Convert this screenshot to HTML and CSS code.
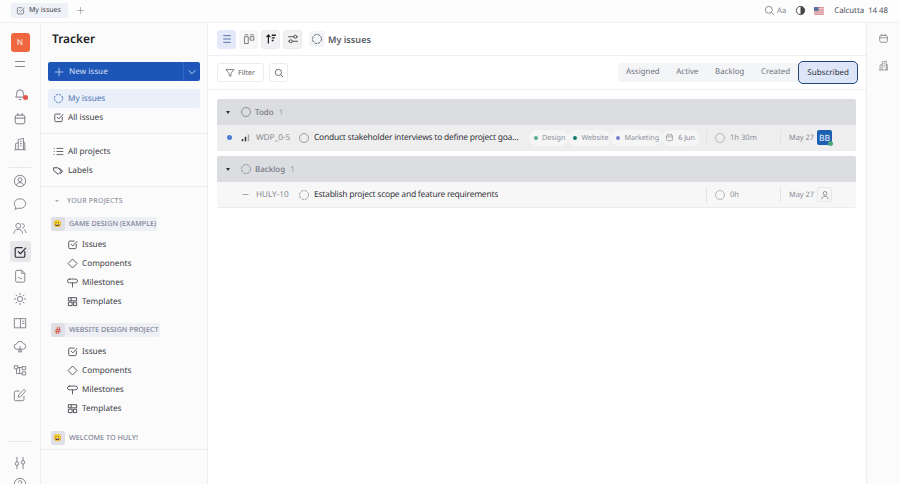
FILE: index.html
```html
<!DOCTYPE html>
<html lang="en">
<head>
<meta charset="utf-8">
<title>My issues</title>
<link rel="stylesheet" href="styles.css">
</head>
<body>
<svg class="defs" width="0" height="0">
  <defs>
    <symbol id="i-check" viewBox="0 0 16 16"><path d="M13.5 7.500v5a1.500 1.500 0 0 1-1.500 1.500H4a1.500 1.500 0 0 1-1.500-1.500V4.500A1.500 1.500 0 0 1 4 3h6.500M6 7.500l2.500 2.500L14.500 3.500" fill="none" stroke="currentColor" stroke-width="1.300" stroke-linecap="round" stroke-linejoin="round"/></symbol>
    <symbol id="i-diamond" viewBox="0 0 16 16"><path d="M8 1.500 14.500 8 8 14.500 1.500 8z" fill="none" stroke="currentColor" stroke-width="1.300" stroke-linejoin="round"/></symbol>
    <symbol id="i-milestone" viewBox="0 0 16 16"><path d="M3.500 3h9a2.200 2.200 0 0 1 0 5.500h-9a2.750 2.750 0 0 1 0-5.500zM8 8.500V14.500" fill="none" stroke="currentColor" stroke-width="1.300" stroke-linejoin="round" stroke-linecap="round"/></symbol>
    <symbol id="i-templates" viewBox="0 0 16 16"><path d="M2 2.500h12v4.500H2zM2 9h5.500v5H2zM9.500 9H14v5H9.500z" fill="none" stroke="currentColor" stroke-width="1.400"/><path d="M6 2.500v4.500" stroke="currentColor" stroke-width="1.400"/></symbol>
    <symbol id="i-calendar" viewBox="0 0 16 16"><path d="M2.500 5.500A2 2 0 0 1 4.500 3.500h7a2 2 0 0 1 2 2v6a2 2 0 0 1-2 2h-7a2 2 0 0 1-2-2zM2.500 7h11M5.500 1.800v2M10.500 1.800v2" fill="none" stroke="currentColor" stroke-width="1.100" stroke-linecap="round"/></symbol>
    <symbol id="i-building" viewBox="0 0 16 16"><path d="M1.500 14.500h13M3 14.500V7.500l3-1M6 14.500V3l6-1.500v13M12 6.500h1.500v8M8 5h2M8 7.500h2M8 10h2" fill="none" stroke="currentColor" stroke-width="1" stroke-linejoin="round"/></symbol>
    <symbol id="i-ring" viewBox="0 0 16 16"><circle cx="8" cy="8" r="6" fill="none" stroke="currentColor" stroke-width="1.300" stroke-dasharray="3.400 1.300"/></symbol>
    <symbol id="i-circle" viewBox="0 0 16 16"><circle cx="8" cy="8" r="6" fill="none" stroke="currentColor" stroke-width="1.300"/></symbol>
  </defs>
</svg>

<div class="app">
  <header class="topbar">
    <div class="tab">
      <svg class="ic9"><use href="#i-check"/></svg>
      <span>My issues</span>
    </div>
    <svg class="tab-plus" viewBox="0 0 12 12"><path d="M6 1.500v9M1.500 6h9" stroke="currentColor" stroke-width="1"/></svg>
    <div class="top-right">
      <svg class="ic11" viewBox="0 0 16 16"><circle cx="7" cy="7" r="5" fill="none" stroke="currentColor" stroke-width="1.100"/><path d="m10.800 10.800 4 4" stroke="currentColor" stroke-width="1.100"/></svg>
      <span class="aa">Aa</span>
      <svg class="ic-contrast" viewBox="0 0 12 12"><circle cx="6" cy="6" r="4.500" fill="none" stroke="#444" stroke-width="1"/><path d="M6 1.500a4.500 4.500 0 0 1 0 9z" fill="#444"/></svg>
      <svg class="flag" viewBox="0 0 10 8"><rect width="10" height="8" rx="1" fill="#d98a90"/><path d="M0 1.500h10M0 3.200h10M0 4.900h10M0 6.600h10" stroke="#f1e4e6" stroke-width=".7"/><rect width="4.500" height="4" fill="#5a6f9c"/></svg>
      <span class="clock"><span>Calcutta</span><span>14 48</span></span>
    </div>
  </header>

  <div class="workspace">
    <nav class="rail">
      <div class="avatar-n">N</div>
      <svg class="rail-menu" viewBox="0 0 12 8"><path d="M1 1.500h10M1 6.500h10" stroke="currentColor" stroke-width="1"/></svg>
      <div class="rail-group top">
        <div class="rail-btn bell">
          <svg class="ic14" viewBox="0 0 16 16"><path d="M3 11.500c1-1.200 1.200-2.500 1.200-4.500a3.800 3.800 0 0 1 7.600 0c0 2 .2 3.300 1.200 4.500zM6.500 13.500a1.600 1.600 0 0 0 3 0" fill="none" stroke="currentColor" stroke-width="1.100" stroke-linejoin="round"/></svg>
          <span class="bell-dot"></span>
        </div>
        <div class="rail-btn"><svg class="ic14"><use href="#i-calendar"/></svg></div>
        <div class="rail-btn"><svg class="ic14"><use href="#i-building"/></svg></div>
      </div>
      <div class="rail-sep"></div>
      <div class="rail-group">
        <div class="rail-btn"><svg class="ic14" viewBox="0 0 16 16"><circle cx="8" cy="8" r="6.500" fill="none" stroke="currentColor" stroke-width="1"/><circle cx="8" cy="6.500" r="2.200" fill="none" stroke="currentColor" stroke-width="1"/><path d="M3.800 12.800c.8-2 2.300-3 4.200-3s3.400 1 4.200 3" fill="none" stroke="currentColor" stroke-width="1"/></svg></div>
        <div class="rail-btn"><svg class="ic14" viewBox="0 0 16 16"><path d="M8 2c3.700 0 6.500 2.400 6.500 5.500S11.700 13 8 13c-.8 0-1.500-.1-2.200-.3L2.500 14.300l.8-3C2 10.300 1.500 9 1.500 7.500 1.500 4.400 4.300 2 8 2z" fill="none" stroke="currentColor" stroke-width="1" stroke-linejoin="round"/></svg></div>
        <div class="rail-btn"><svg class="ic14" viewBox="0 0 16 16"><circle cx="6" cy="5.500" r="2.800" fill="none" stroke="currentColor" stroke-width="1"/><path d="M1 14c.4-3 2.300-4.500 5-4.500s4.500 1.500 5 4.500M10.500 3c1.700.3 2.500 1.400 2.500 2.600s-.8 2.200-2 2.500M13 10c1.200.7 1.800 1.800 2 3.200" fill="none" stroke="currentColor" stroke-width="1" stroke-linecap="round"/></svg></div>
        <div class="rail-btn active"><svg class="ic14"><use href="#i-check"/></svg></div>
        <div class="rail-btn"><svg class="ic14" viewBox="0 0 16 16"><path d="M3 3a1.500 1.500 0 0 1 1.500-1.500H10L13.500 5v8.500A1.500 1.500 0 0 1 12 15H4.500A1.500 1.500 0 0 1 3 13.500zM10 1.500V5h3.500M5.500 10.500c1-1.500 1.800-1.500 2.500 0s1.500 1 2.500 0" fill="none" stroke="currentColor" stroke-width="1" stroke-linejoin="round"/></svg></div>
        <div class="rail-btn"><svg class="ic14" viewBox="0 0 16 16"><circle cx="8" cy="8" r="3" fill="none" stroke="currentColor" stroke-width="1"/><path d="M8 1.500v1.500M8 13v1.500M1.500 8H3M13 8h1.500M3.400 3.400l1 1M11.600 11.600l1 1M3.400 12.600l1-1M11.600 4.400l1-1" stroke="currentColor" stroke-width="1" stroke-linecap="round"/></svg></div>
        <div class="rail-btn"><svg class="ic14" viewBox="0 0 16 16"><path d="M1.500 3h13v10.500h-13zM8.500 3v10.500M10.500 6h2.500M10.500 8.500h2.500" fill="none" stroke="currentColor" stroke-width="1"/></svg></div>
        <div class="rail-btn"><svg class="ic14" viewBox="0 0 16 16"><path d="M4.500 10.500a3 3 0 0 1-.3-6A4 4 0 0 1 11.800 4a3.300 3.300 0 0 1 0 6.500zM8 7v6.500M5.500 13.500h5M8 10.500 6 12M8 10.500l2 1.500" fill="none" stroke="currentColor" stroke-width="1" stroke-linejoin="round"/></svg></div>
        <div class="rail-btn"><svg class="ic14" viewBox="0 0 16 16"><path d="M1.500 2h4v3.500h-4zM10.500 3h4v3.500h-4zM10.500 9h4v3.500h-4zM5.500 4h5M4 5.500V11h6.500M7.500 4v7" fill="none" stroke="currentColor" stroke-width="1"/></svg></div>
        <div class="rail-btn"><svg class="ic14" viewBox="0 0 16 16"><path d="M12.500 9v4a1.500 1.500 0 0 1-1.500 1.500H3A1.500 1.500 0 0 1 1.500 13V5A1.500 1.500 0 0 1 3 3.500h4.500M6 10.500l.5-2.500 6-6.500 2 2-6 6.500z" fill="none" stroke="currentColor" stroke-width="1" stroke-linejoin="round"/></svg></div>
      </div>
      <div class="rail-bottom">
        <div class="rail-sep"></div>
        <div class="rail-btn"><svg class="ic14" viewBox="0 0 16 16"><path d="M4.500 1.500v5M4.500 11v3.500M11.500 1.500V5M11.500 9.500v5" stroke="currentColor" stroke-width="1" stroke-linecap="round"/><circle cx="4.500" cy="8.700" r="2" fill="none" stroke="currentColor" stroke-width="1"/><circle cx="11.500" cy="7.200" r="2" fill="none" stroke="currentColor" stroke-width="1"/></svg></div>
        <div class="rail-btn"><svg class="ic14" viewBox="0 0 16 16"><circle cx="8" cy="8" r="6.500" fill="none" stroke="currentColor" stroke-width="1"/><path d="M6 6.300a2 2 0 1 1 3 1.700c-.7.400-1 .8-1 1.500M8 11.500v.5" fill="none" stroke="currentColor" stroke-width="1"/></svg></div>
      </div>
    </nav>

    <aside class="sidebar">
      <h1 class="side-title">Tracker</h1>
      <div class="new-issue">
        <span class="new-main">
          <svg class="ic10" viewBox="0 0 12 12"><path d="M6 1v10M1 6h10" stroke="currentColor" stroke-width="1"/></svg>
          New issue
        </span>
        <span class="new-drop"><svg class="ic10" viewBox="0 0 12 12"><path d="m2 4 4 4 4-4" fill="none" stroke="currentColor" stroke-width="1.200"/></svg></span>
      </div>
      <div class="side-section">
        <div class="side-item selected"><svg class="ic11"><use href="#i-ring"/></svg>My issues</div>
        <div class="side-item"><svg class="ic11"><use href="#i-check"/></svg>All issues</div>
      </div>
      <div class="side-section">
        <div class="side-item"><svg class="ic11" viewBox="0 0 16 16"><path d="M5 3.500h10M5 8h10M5 12.500h10M1 3.500h1.500M1 8h1.500M1 12.500h1.500" stroke="currentColor" stroke-width="1.200"/></svg>All projects</div>
        <div class="side-item"><svg class="ic11" viewBox="0 0 16 16"><path d="M1 4h6l5 5-4.500 4.500-6.500-5.500zM9 4l5 5-3.500 4" fill="none" stroke="currentColor" stroke-width="1.400" stroke-linejoin="round"/></svg>Labels</div>
      </div>
      <div class="side-projects">
        <div class="side-caption"><span class="caret-small"></span>YOUR PROJECTS</div>
        <div class="project"><span class="project-chip"><span class="emoji">😀</span><span class="project-name">GAME DESIGN (EXAMPLE)</span></span></div>
        <div class="side-item sub"><svg class="ic11"><use href="#i-check"/></svg>Issues</div>
        <div class="side-item sub"><svg class="ic11"><use href="#i-diamond"/></svg>Components</div>
        <div class="side-item sub"><svg class="ic11"><use href="#i-milestone"/></svg>Milestones</div>
        <div class="side-item sub"><svg class="ic11"><use href="#i-templates"/></svg>Templates</div>
        <div class="project"><span class="project-chip"><span class="emoji hash">#</span><span class="project-name">WEBSITE DESIGN PROJECT</span></span></div>
        <div class="side-item sub"><svg class="ic11"><use href="#i-check"/></svg>Issues</div>
        <div class="side-item sub"><svg class="ic11"><use href="#i-diamond"/></svg>Components</div>
        <div class="side-item sub"><svg class="ic11"><use href="#i-milestone"/></svg>Milestones</div>
        <div class="side-item sub"><svg class="ic11"><use href="#i-templates"/></svg>Templates</div>
        <div class="project last"><span class="project-chip plain"><span class="emoji">😀</span><span class="project-name">WELCOME TO HULY!</span></span></div>
      </div>
    </aside>

    <main class="main">
      <div class="toolbar">
        <span class="tool-btn on"><svg class="ic12" viewBox="0 0 16 16"><path d="M3 3.500h10M3 8h10M3 12.500h10" stroke="currentColor" stroke-width="1.200"/></svg></span>
        <span class="tool-btn plain"><svg class="ic12" viewBox="0 0 16 16"><path d="M2 2.500h5M2 5h5v9H2zM9.500 2.500h5M9.500 5h5v4.500h-5z" fill="none" stroke="currentColor" stroke-width="1"/></svg></span>
        <span class="tool-btn gray"><svg class="ic12" viewBox="0 0 16 16"><path d="M4.500 14V3M2 5.500l2.500-3 2.500 3" fill="none" stroke="#222" stroke-width="1.600"/><path d="M9 3h5.500M9 6.500h4M9 10h2.500" stroke="#222" stroke-width="1.700"/></svg></span>
        <span class="tool-btn gray"><svg class="ic12" viewBox="0 0 16 16"><path d="M1.500 5h7.500M13 5h1.500M1.500 11H3M7 11h7.500" stroke="#333" stroke-width="1.100"/><circle cx="11" cy="5" r="2" fill="none" stroke="#333" stroke-width="1.100"/><circle cx="5" cy="11" r="2" fill="none" stroke="#333" stroke-width="1.100"/></svg></span>
        <span class="crumb"><span class="crumb-ic"><svg class="ic12"><use href="#i-ring"/></svg></span>My issues</span>
      </div>
      <div class="filterbar">
        <span class="filter-btn"><svg class="ic10" viewBox="0 0 16 16"><path d="M1.500 2.500h13L9.500 8.500v5l-3-1.500V8.500z" fill="none" stroke="currentColor" stroke-width="1.200" stroke-linejoin="round"/></svg>Filter</span>
        <span class="search-btn"><svg class="ic10" viewBox="0 0 16 16"><circle cx="7" cy="7" r="5" fill="none" stroke="currentColor" stroke-width="1.300"/><path d="m10.800 10.800 3.700 3.700" stroke="currentColor" stroke-width="1.300"/></svg></span>
        <div class="tabs">
          <span class="seg">Assigned</span>
          <span class="seg">Active</span>
          <span class="seg">Backlog</span>
          <span class="seg">Created</span>
          <span class="seg current">Subscribed</span>
        </div>
      </div>
      <div class="list">
        <section class="group">
          <div class="group-head">
            <span class="caret"></span>
            <svg class="ic12 status"><use href="#i-circle"/></svg>
            <span class="group-name">Todo</span><span class="group-count">1</span>
          </div>
          <div class="row hover">
            <span class="unread"></span>
            <svg class="prio" viewBox="0 0 12 12"><rect x="1" y="8" width="2" height="3" fill="#333"/><rect x="5" y="5" width="2" height="6" fill="#333"/><rect x="9" y="2" width="2" height="9" fill="#aaa"/></svg>
            <span class="issue-id">WDP_0-5</span>
            <svg class="ic12 row-status"><use href="#i-circle"/></svg>
            <span class="issue-title short">Conduct stakeholder interviews to define project goals and user needs</span>
            <span class="pill"><i class="dot d1"></i>Design</span>
            <span class="pill"><i class="dot d2"></i>Website</span>
            <span class="pill"><i class="dot d3"></i>Marketing</span>
            <span class="pill date"><svg class="ic9"><use href="#i-calendar"/></svg>6 Jun</span>
            <span class="estimate"><svg class="ic12 est-ic"><use href="#i-circle"/></svg>1h 30m</span>
            <span class="modified">May 27</span>
            <span class="assignee bb">BB<i class="online"></i></span>
          </div>
        </section>
        <section class="group">
          <div class="group-head">
            <span class="caret"></span>
            <svg class="ic12 status"><use href="#i-ring"/></svg>
            <span class="group-name">Backlog</span><span class="group-count">1</span>
          </div>
          <div class="row">
            <span class="unread none"></span>
            <svg class="prio" viewBox="0 0 12 12"><path d="M2 6h8" stroke="#888" stroke-width="1"/></svg>
            <span class="issue-id">HULY-10</span>
            <svg class="ic12 row-status"><use href="#i-ring"/></svg>
            <span class="issue-title">Establish project scope and feature requirements</span>
            <span class="estimate"><svg class="ic12 est-ic"><use href="#i-circle"/></svg>0h</span>
            <span class="modified">May 27</span>
            <span class="assignee empty"><svg viewBox="0 0 12 12" class="ic10"><circle cx="6" cy="4" r="2.200" fill="none" stroke="currentColor" stroke-width=".9"/><path d="M2 11c.3-2.500 1.800-3.500 4-3.500s3.700 1 4 3.500" fill="none" stroke="currentColor" stroke-width=".9"/></svg></span>
          </div>
        </section>
      </div>
    </main>

    <aside class="right-rail">
      <svg class="ic11"><use href="#i-calendar"/></svg>
      <svg class="ic11"><use href="#i-building"/></svg>
    </aside>
  </div>
</div>
</body>
</html>
```
FILE: styles.css
```css
* { box-sizing: border-box; }
html, body { margin: 0; height: 100%; overflow: hidden; }
body {
  font-family: "Noto Sans", "Open Sans", sans-serif;
  font-size: 8.5px;
  color: #2b2d33;
  background: #fdfdfd;
  text-rendering: geometricPrecision;
}
.defs { position: absolute; }
.ic9 { width: 9px; height: 9px; flex: none; }
.ic10 { width: 10px; height: 10px; flex: none; }
.ic11 { width: 11px; height: 11px; flex: none; }
.ic12 { width: 12px; height: 12px; flex: none; }
.ic14 { width: 14px; height: 14px; flex: none; }

.app { display: flex; flex-direction: column; height: 484px; width: 900px; }

.topbar { height: 22px; display: flex; align-items: center; padding: 0 12px 1px 11px; flex: none; }
.tab {
  width: 57px; height: 15px; border-radius: 2px; background: #eef1f8;
  display: flex; align-items: center; gap: 4px; padding-left: 5px;
  font-size: 7px; color: #3f4148; white-space: nowrap;
}
.tab .ic9 { color: #666; }
.tab-plus { width: 9px; height: 9px; margin-left: 8px; color: #999; }
.top-right { margin-left: auto; display: flex; align-items: center; color: #6b6d75; }
.aa { font-size: 7.600px; margin-left: 2px; color: #80828a; }
.ic-contrast { width: 11px; height: 11px; margin-left: 9px; }
.flag { width: 10px; height: 8px; margin-left: 8px; }
.clock { display: flex; gap: 4px; margin-left: 10px; font-size: 7.800px; color: #4b4d55; }

.workspace { flex: 1; display: flex; min-height: 0; border-top: 1px solid #f1f1f3; }

.rail {
  width: 41px; flex: none; display: flex; flex-direction: column; align-items: center;
  border-right: 1px solid #eeeef1; padding-top: 10px; background: #fbfbfc;
}
.avatar-n {
  width: 19px; height: 19px; border-radius: 3px; background: #f0663f; color: #fbdcd0;
  font-size: 8px; font-weight: 600; display: flex; align-items: center; justify-content: center; flex: none;
}
.rail-menu { width: 12px; height: 8px; margin-top: 8px; color: #888; flex: none; }
.rail-group { display: flex; flex-direction: column; align-items: center; gap: 2.800px; margin-top: 2px; flex: none; }
.rail-group.top { margin-top: 15px; gap: 4px; }
.rail-btn {
  width: 21px; height: 21px; display: flex; align-items: center; justify-content: center;
  color: #777981; border-radius: 3px; position: relative; flex: none;
}
.rail-btn.active { background: #e8e8ea; color: #2a2c33; }
.bell-dot {
  position: absolute; right: 3px; bottom: 4px; width: 5px; height: 5px;
  border-radius: 50%; background: #e2554b;
}
.rail-sep { width: 22px; height: 1px; background: #e9e9ec; margin-top: 13px; flex: none; }
.rail-bottom { margin-top: 36px; display: flex; flex-direction: column; align-items: center; flex: none; }
.rail-bottom .rail-sep { margin: 0 0 10px; }

.sidebar {
  width: 167px; flex: none; background: #fbfbfc; border-right: 1px solid #eeeef1;
  display: flex; flex-direction: column;
}
.side-title { margin: 6px 0 0 11px; font-size: 11.900px; line-height: 20px; font-weight: 600; color: #1d1f24; }
.new-issue {
  margin: 13px 7px 0 7px; height: 19px; display: flex; background: #1e56b8; border-radius: 2px;
  color: #c3d4ee; flex: none;
}
.new-main { flex: 1; display: flex; align-items: center; gap: 5px; padding-left: 6px; font-size: 8px; font-weight: 500; }
.new-drop { width: 17px; display: flex; align-items: center; justify-content: center; border-left: 1px solid #2f67c6; }
.side-section { padding: 8px 7px 6px 7px; border-bottom: 1px solid #ececef; flex: none; }
.side-item {
  height: 19px; display: flex; align-items: center; gap: 4px; padding-left: 5px;
  color: #3b3d44; font-size: 8.200px; border-radius: 3px;
}
.side-item .ic11 { color: #4b4d55; }
.side-item.selected { background: #eaf0fa; color: #4d73b4; }
.side-item.selected .ic11 { color: #4d73b4; }
.side-item.sub { padding-left: 19px; }
.side-projects { padding: 0 7px 3px 7px; border-bottom: 1px solid #ececef; flex: none; }
.side-caption {
  height: 26px; padding-top: 2px; display: flex; align-items: center; gap: 8px; padding-left: 7px;
  font-size: 7px; font-weight: 500; letter-spacing: .2px; color: #8d93a3;
}
.caret-small { width: 0; height: 0; border-left: 2px solid transparent; border-right: 2px solid transparent; border-top: 2.500px solid #aaa; }
.project { height: 16px; margin: 3px 0 3px 3px; display: flex; align-items: center; }
.side-item + .project { margin-top: 11px; margin-bottom: 4px; }
.side-item + .project.last { margin-top: 12px; margin-bottom: 0; }
.project-chip { display: flex; align-items: center; height: 14px; background: #eff0f5; border-radius: 2px; padding-right: 1px; }
.project-chip.plain { background: none; }
.emoji {
  width: 14px; height: 14px; background: #dfe0e6; border-radius: 2px; font-size: 7px;
  display: flex; align-items: center; justify-content: center; color: #e2b23b; margin-right: 4px;
  overflow: hidden;
}
.emoji.hash { color: #d5574a; font-size: 10px; font-weight: 600; }
.project-name { font-size: 7.200px; font-weight: 500; color: #7f8598; white-space: nowrap; }

.main { flex: 1; min-width: 0; background: #fff; display: flex; flex-direction: column; border-right: 1px solid #eeeef1; }
.toolbar {
  height: 33px; flex: none; display: flex; align-items: center; gap: 3px; padding-left: 9px;
  border-bottom: 1px solid #f0f0f2;
}
.tool-btn { width: 19px; height: 19px; border-radius: 3px; display: flex; align-items: center; justify-content: center; color: #555; }
.tool-btn.on { background: #e3e9f8; color: #4d6aa3; }
.tool-btn.plain { background: #f7f7f8; }
.tool-btn.gray { background: #f1f1f3; border: 1px solid #ebebed; }
.crumb { display: flex; align-items: center; gap: 3px; margin-left: 4px; font-size: 9.100px; font-weight: 600; color: #5a5d66; }
.crumb-ic { width: 16px; height: 16px; border-radius: 3px; background: #f4f5f8; display: flex; align-items: center; justify-content: center; }
.filterbar {
  height: 34px; flex: none; display: flex; align-items: center; padding: 0 8px 0 9px;
  border-bottom: 1px solid #f0f0f2;
}
.filter-btn {
  width: 47px; height: 19px; display: flex; align-items: center; gap: 3px; padding-left: 7px;
  border: 1px solid #ececef; border-radius: 3px; font-size: 7.200px; color: #5d5f68;
}
.search-btn {
  width: 19px; height: 19px; margin-left: 5px; display: flex; align-items: center; justify-content: center;
  border: 1px solid #ececef; border-radius: 3px; color: #4f5159;
}
.tabs { margin-left: auto; display: flex; align-items: center; height: 19px; background: #f4f5f7; border-radius: 3px; }
.seg { padding: 0 8.300px; font-size: 7.900px; line-height: 19px; color: #70747f; white-space: nowrap; }
.seg.current {
  height: 23px; line-height: 21px; padding: 0 8px; background: #dde6f9; color: #2f3138; font-size: 8px;
  border: 1px solid #23457a; border-radius: 5px;
}
.list { padding: 9px 10px 0 9px; display: flex; flex-direction: column; gap: 5px; }
.group { border-radius: 2px; overflow: hidden; }
.group-head {
  height: 26px; display: flex; align-items: center; background: #dcdde1; color: #777983; font-size: 8px;
}
.caret { width: 0; height: 0; margin-left: 9px; border-left: 2.500px solid transparent; border-right: 2.500px solid transparent; border-top: 3.500px solid #333; }
.status { margin-left: 10px; color: #8a8c94; }
.group-name { margin-left: 3px; font-weight: 500; }
.group-count { margin-left: 5px; color: #9a9ca5; }
.row { height: 26px; display: flex; align-items: center; background: #f7f7f8; border-bottom: 1px solid #ececee; color: #2f3138; }
.row.hover { background: #eeeeef; }
.unread { width: 5px; height: 5px; border-radius: 50%; background: #4d7fd0; margin-left: 10px; flex: none; }
.unread.none { background: none; }
.prio { width: 9px; height: 9px; margin-left: 9px; flex: none; }
.issue-id { width: 42px; margin-left: 6px; color: #85878f; font-size: 8.200px; flex: none; }
.row-status { color: #999; flex: none; }
.issue-title {
  margin-left: 4px; overflow: hidden; text-overflow: ellipsis; white-space: nowrap;
  font-size: 8.500px; letter-spacing: -.25px; color: #33353b;
}
.issue-title.short { width: 205px; flex: none; }
.pill {
  display: flex; align-items: center; gap: 4px; height: 16px; padding: 0 3px 0 5px;
  background: #f5f5f6; border-radius: 8px; font-size: 7.200px; color: #8b8f9a; flex: none;
}
.issue-title + .pill { margin-left: 10px; }
.dot { width: 4px; height: 4px; border-radius: 50%; flex: none; }
.d1 { background: #50ae96; }
.d2 { background: #17796e; }
.d3 { background: #7a7fd0; }
.pill.date { color: #85878f; padding: 0 5px 0 3px; }
.estimate {
  margin-left: auto; width: 75px; height: 16px; display: flex; align-items: center; gap: 4px; padding-left: 7px;
  border-left: 1px solid #e3e3e5; border-right: 1px solid #e3e3e5; color: #8d8f97; font-size: 7.600px; flex: none;
}
.est-ic { color: #b5b5b9; }
.modified { margin-left: 8px; font-size: 7.400px; color: #85878f; width: 28px; white-space: nowrap; flex: none; }
.assignee {
  width: 15px; height: 15px; margin-right: 24px; border-radius: 2px; flex: none; display: flex;
  align-items: center; justify-content: center; position: relative; font-size: 8.600px;
}
.assignee.bb { background: #1d5fb0; color: #d5e4f5; font-weight: 500; }
.assignee.empty { border: 1px solid #e6e6e8; color: #777; }
.online { position: absolute; right: -1px; bottom: -1px; width: 5px; height: 5px; border-radius: 50%; background: #4fa47a; }

.right-rail { width: 33px; flex: none; display: flex; flex-direction: column; align-items: center; gap: 16px; padding-top: 10px; color: #777; background: #fbfbfc; }
```
